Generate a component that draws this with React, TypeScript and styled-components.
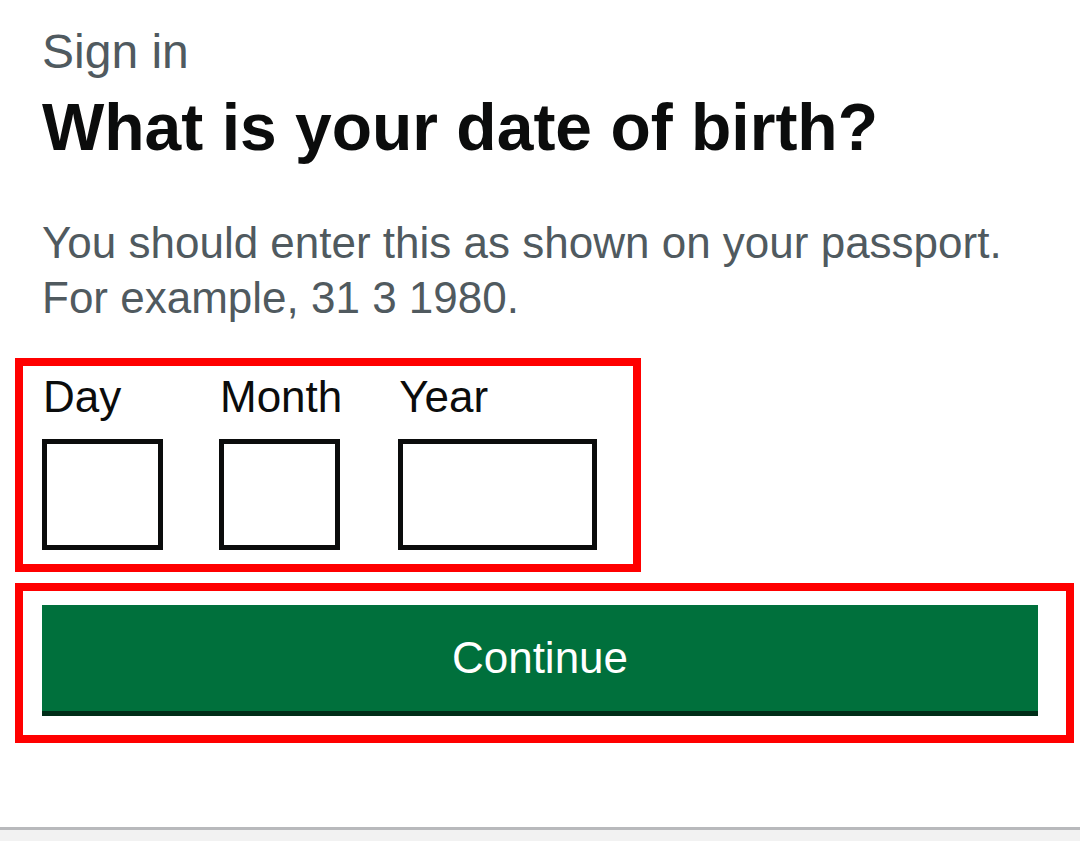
import styled, { createGlobalStyle } from "styled-components";

const GlobalStyle = createGlobalStyle`
  * { box-sizing: border-box; }
  body {
    margin: 0;
    background: #ffffff;
    font-family: "Liberation Sans", Arial, sans-serif;
    color: #0b0c0c;
  }
`;

const Page = styled.div`
  display: flex;
  flex-direction: column;
  height: 100vh;
  overflow: hidden;
`;

const Main = styled.main`
  padding: 24px 42px 0 42px;
`;

const Caption = styled.span`
  display: block;
  font-size: 48px;
  line-height: 56px;
  color: #505a5f;
`;

const Heading = styled.h1`
  margin: 9px 0 0 0;
  font-size: 66px;
  line-height: 76px;
  font-weight: 700;
  color: #0b0c0c;
`;

const Hint = styled.p`
  margin: 50px 0 0 0;
  font-size: 44px;
  line-height: 55px;
  color: #505a5f;
`;

// red annotation frame drawn round a part of the form
const Highlight = styled.div<{ $width: number; $top: number }>`
  width: ${(p) => p.$width}px;
  margin: ${(p) => p.$top}px 0 0 -27px;
  border: 8px solid #ff0000;
`;

const Fieldset = styled.fieldset`
  margin: 0;
  padding: 6px 19px 14px 19px;
  border: none;
  display: flex;
  gap: 56px;
`;

const Field = styled.div`
  display: flex;
  flex-direction: column;
  gap: 17px;
`;

const Label = styled.label`
  font-size: 44px;
  line-height: 50px;
  color: #0b0c0c;
  padding-left: 1px;
`;

const Input = styled.input<{ $wide?: boolean }>`
  width: ${(p) => (p.$wide ? "199px" : "121px")};
  height: 111px;
  border: 5px solid #0b0c0c;
  border-radius: 0;
  background: #ffffff;
  font-family: inherit;
  font-size: 44px;
  padding: 0 10px;
  outline: none;
`;

const ButtonWrap = styled.div`
  padding: 14px 28px 24px 19px;
`;

const Button = styled.button`
  display: flex;
  align-items: center;
  justify-content: center;
  width: 100%;
  height: 106px;
  border: none;
  border-radius: 0;
  background: #00703c;
  box-shadow: 0 5px 0 #002d18;
  color: #ffffff;
  font-family: inherit;
  font-size: 44px;
  line-height: 44px;
  cursor: pointer;
`;

const Footer = styled.footer`
  flex: 1;
  margin-top: 84px;
  border-top: 3px solid #b8b9bc;
  background: #f2f2f2;
`;

const App = () => {
  return (
    <Page>
      <GlobalStyle />
      <Main>
        <Caption>Sign in</Caption>
        <Heading>What is your date of birth?</Heading>
        <Hint>
          You should enter this as shown on your passport.
          <br />
          For example, 31 3 1980.
        </Hint>
        <Highlight $width={626} $top={33}>
          <Fieldset>
            <Field>
              <Label htmlFor="dob-day">Day</Label>
              <Input id="dob-day" inputMode="numeric" />
            </Field>
            <Field>
              <Label htmlFor="dob-month">Month</Label>
              <Input id="dob-month" inputMode="numeric" />
            </Field>
            <Field>
              <Label htmlFor="dob-year">Year</Label>
              <Input id="dob-year" inputMode="numeric" $wide />
            </Field>
          </Fieldset>
        </Highlight>
        <Highlight $width={1059} $top={11}>
          <ButtonWrap>
            <Button>Continue</Button>
          </ButtonWrap>
        </Highlight>
      </Main>
      <Footer />
    </Page>
  );
};

export default App;
